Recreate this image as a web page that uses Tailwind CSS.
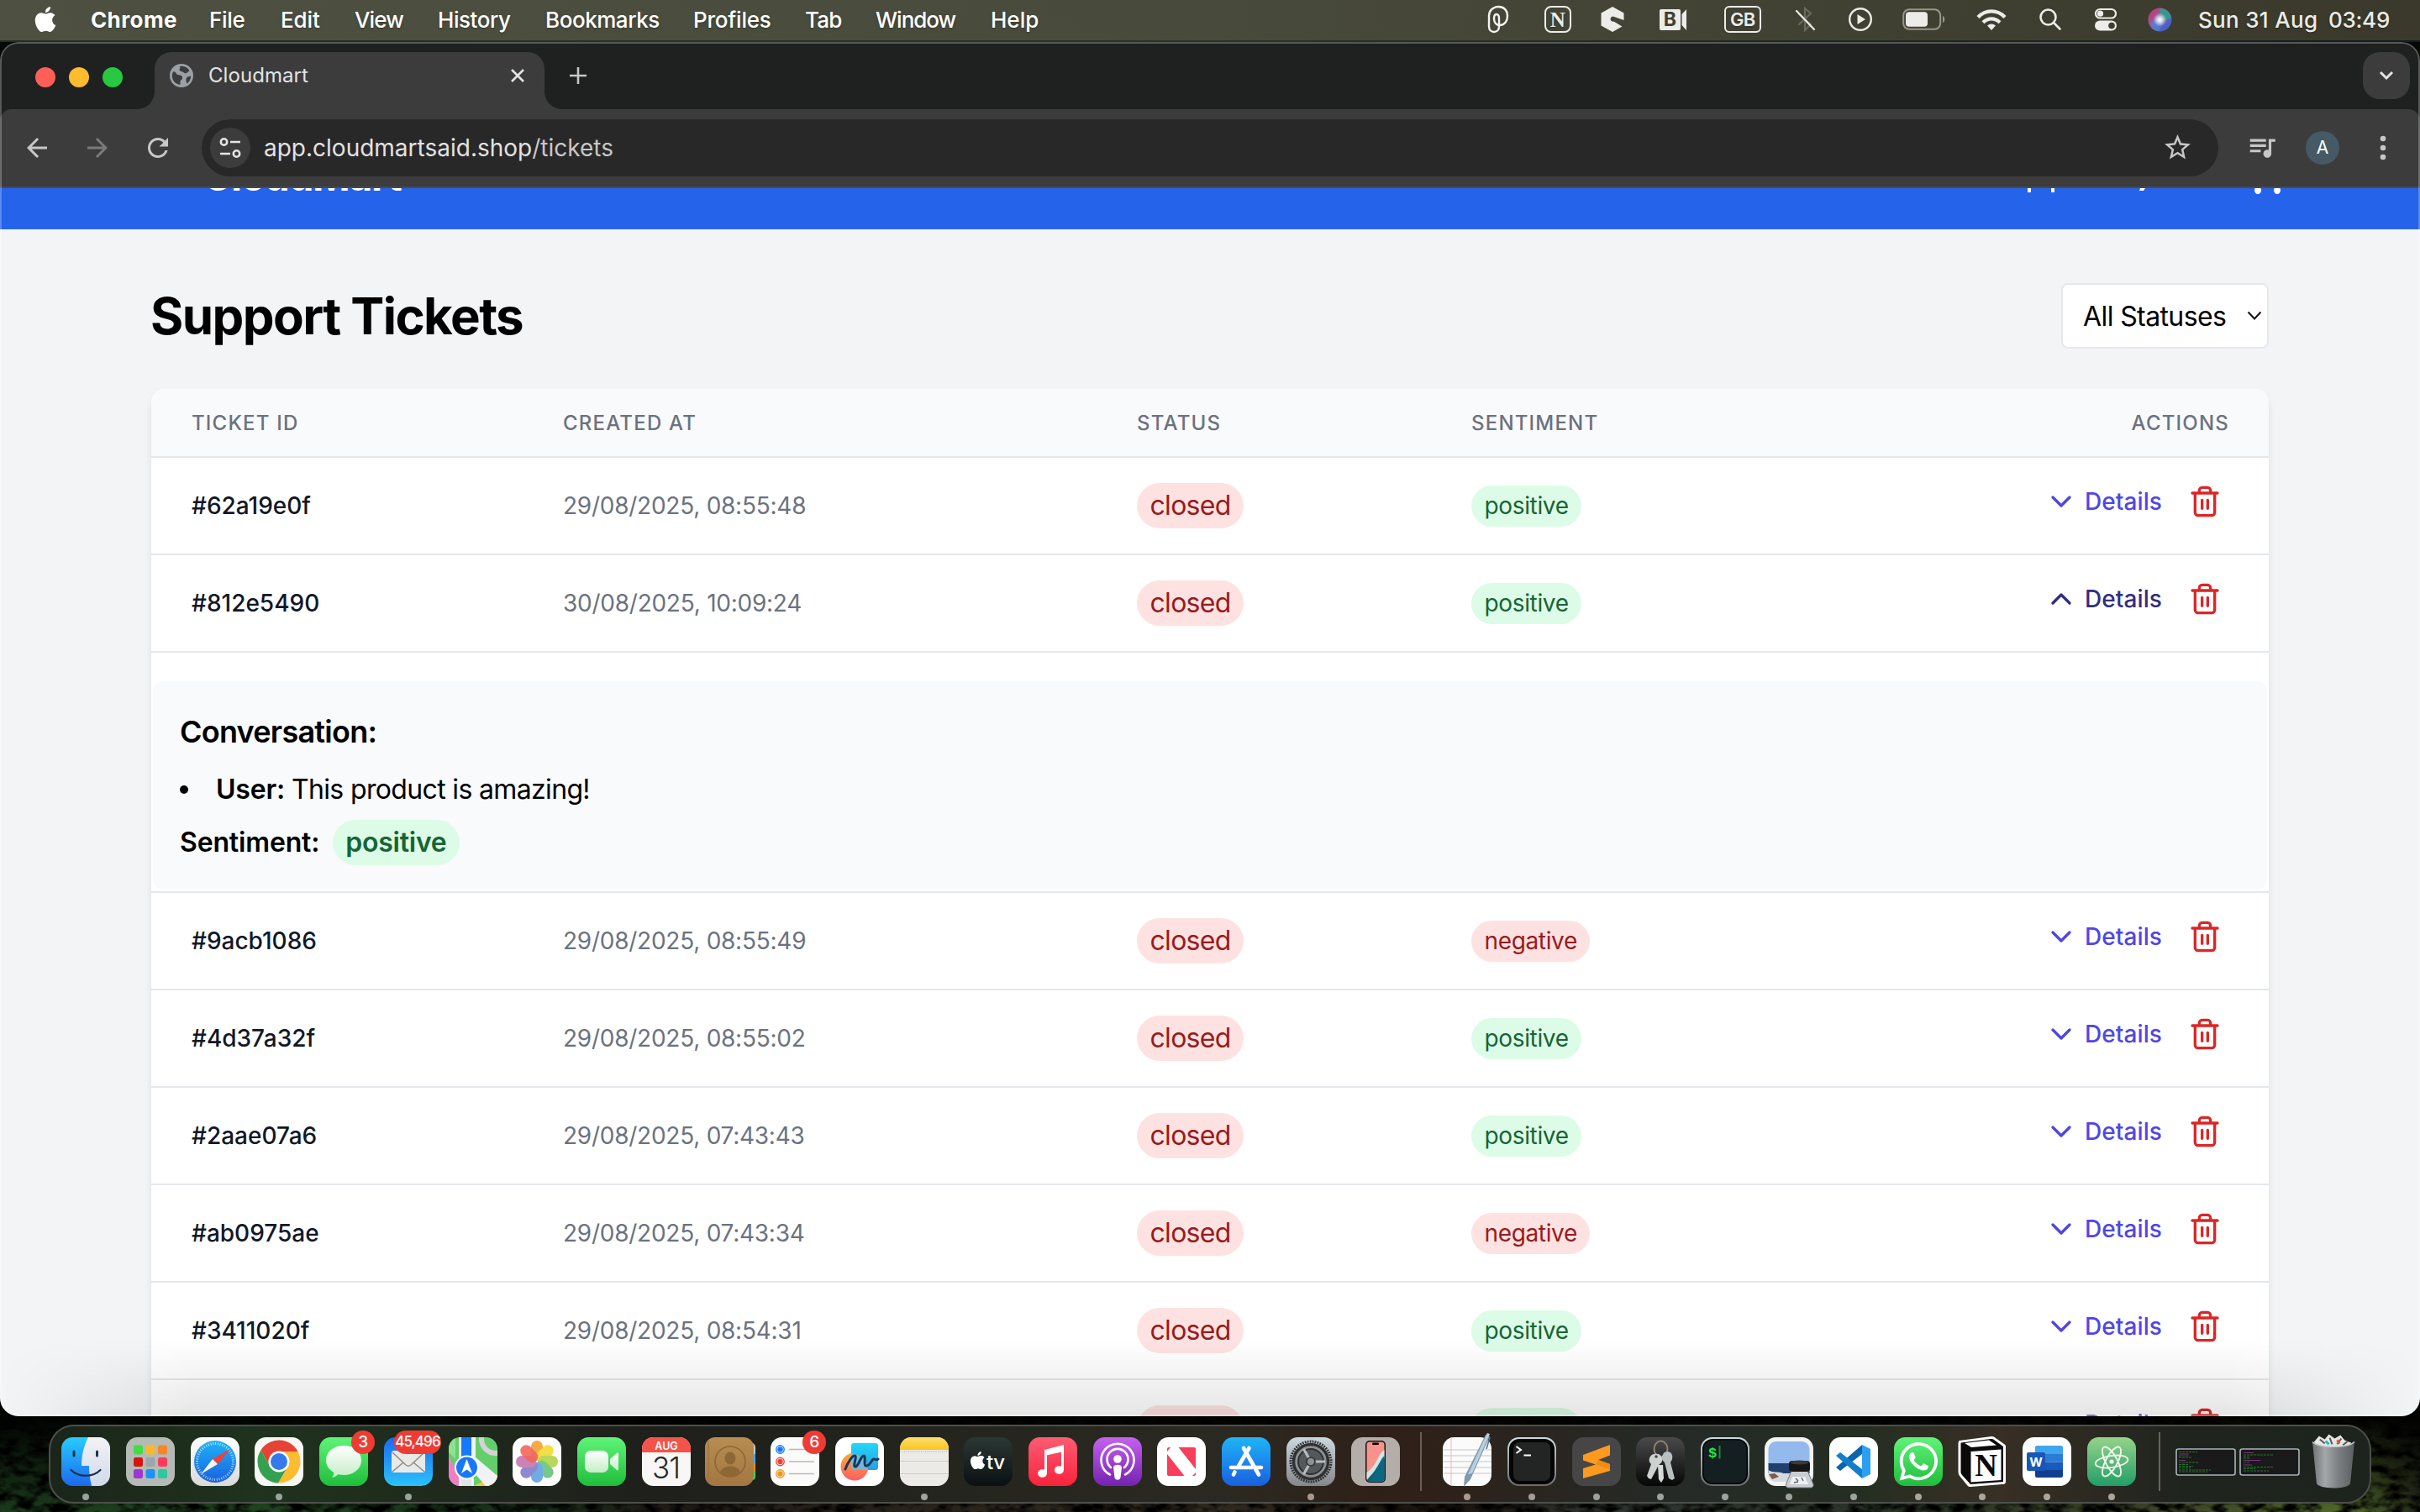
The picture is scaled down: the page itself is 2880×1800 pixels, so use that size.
<!DOCTYPE html>
<html lang="en">
<head>
<meta charset="utf-8">
<title>Cloudmart</title>
<script src="https://cdn.jsdelivr.net/npm/@tailwindcss/browser@4"></script>
</head>
<body class="h-[1800px] w-[2880px] overflow-hidden bg-[#060806] font-['Inter',sans-serif] text-black">

<svg width="0" height="0" class="absolute">
  <defs>
    <linearGradient id="gGreen" x1="0" y1="0" x2="0" y2="1"><stop offset="0" stop-color="#5ff478"/><stop offset="1" stop-color="#20bd3c"/></linearGradient>
    <linearGradient id="gFinder" x1="0" y1="0" x2="0" y2="1"><stop offset="0" stop-color="#27ccfd"/><stop offset="1" stop-color="#1d68ef"/></linearGradient>
    <linearGradient id="gFinderR" x1="0" y1="0" x2="0" y2="1"><stop offset="0" stop-color="#f4f2f4"/><stop offset="1" stop-color="#cfdaea"/></linearGradient>
    <linearGradient id="gMail" x1="0" y1="0" x2="0" y2="1"><stop offset="0" stop-color="#1c68f0"/><stop offset="1" stop-color="#2ac3fb"/></linearGradient>
    <linearGradient id="gBlue" x1="0" y1="0" x2="0" y2="1"><stop offset="0" stop-color="#1fb4f6"/><stop offset="1" stop-color="#1a5fe0"/></linearGradient>
    <linearGradient id="gWhite" x1="0" y1="0" x2="0" y2="1"><stop offset="0" stop-color="#ffffff"/><stop offset="1" stop-color="#d9dad9"/></linearGradient>
    <linearGradient id="gBubble" x1="0" y1="0" x2="0" y2="1"><stop offset="0" stop-color="#ffffff"/><stop offset="1" stop-color="#c4edc6"/></linearGradient>
    <linearGradient id="gContacts" x1="0" y1="0" x2="0" y2="1"><stop offset="0" stop-color="#b78d52"/><stop offset="1" stop-color="#a47641"/></linearGradient>
    <linearGradient id="gNotes" x1="0" y1="0" x2="0" y2="1"><stop offset="0" stop-color="#fbe06b"/><stop offset="1" stop-color="#fdc31f"/></linearGradient>
    <linearGradient id="gTv" x1="0" y1="0" x2="0" y2="1"><stop offset="0" stop-color="#2b3835"/><stop offset="1" stop-color="#0b1012"/></linearGradient>
    <linearGradient id="gMusic" x1="0" y1="0" x2="0" y2="1"><stop offset="0" stop-color="#fb5c74"/><stop offset="1" stop-color="#fa233b"/></linearGradient>
    <linearGradient id="gPod" x1="0" y1="0" x2="0" y2="1"><stop offset="0" stop-color="#c561ee"/><stop offset="1" stop-color="#7423b0"/></linearGradient>
    <linearGradient id="gSet" x1="0" y1="0" x2="0" y2="1"><stop offset="0" stop-color="#ccd7de"/><stop offset="1" stop-color="#86878a"/></linearGradient>
    <linearGradient id="gKey" x1="0" y1="0" x2="0" y2="1"><stop offset="0" stop-color="#4a4a4c"/><stop offset="1" stop-color="#060606"/></linearGradient>
    <linearGradient id="gRim" x1="0" y1="0" x2="0" y2="1"><stop offset="0" stop-color="#c6dde2"/><stop offset="1" stop-color="#6d6b69"/></linearGradient>
    <linearGradient id="gAtom" x1="0" y1="0" x2="0" y2="1"><stop offset="0" stop-color="#95d38a"/><stop offset="1" stop-color="#229e68"/></linearGradient>
    <linearGradient id="gFree" x1="0" y1="0" x2="0" y2="1"><stop offset="0" stop-color="#22d7f9"/><stop offset="1" stop-color="#2a9fe0"/></linearGradient>
    <linearGradient id="gOrange" x1="0" y1="0" x2="0" y2="1"><stop offset="0" stop-color="#fbab3d"/><stop offset="1" stop-color="#fb5f62"/></linearGradient>
    <linearGradient id="gTrash" x1="0" y1="0" x2="1" y2="0"><stop offset="0" stop-color="#6e7275"/><stop offset=".3" stop-color="#a3a7aa"/><stop offset=".6" stop-color="#7d8184"/><stop offset="1" stop-color="#5b5f61"/></linearGradient>
    <linearGradient id="gSiri" x1="0" y1="0" x2="1" y2="1"><stop offset="0" stop-color="#d82b5f"/><stop offset=".45" stop-color="#8d5fa8"/><stop offset="1" stop-color="#1b62d6"/></linearGradient>
    <radialGradient id="gGlow"><stop offset="0" stop-color="#fff"/><stop offset=".35" stop-color="#fff" stop-opacity=".75"/><stop offset="1" stop-color="#fff" stop-opacity="0"/></radialGradient>
    <clipPath id="sq"><rect width="58" height="58" rx="13.500"/></clipPath>
    <g id="apple"><path d="M12.152 6.896c-.948 0-2.415-1.078-3.96-1.04-2.04.027-3.91 1.183-4.961 3.014-2.117 3.675-.546 9.103 1.519 12.09 1.013 1.454 2.208 3.09 3.792 3.039 1.52-.065 2.09-.987 3.935-.987 1.831 0 2.35.987 3.96.948 1.637-.026 2.676-1.48 3.676-2.948 1.156-1.688 1.636-3.325 1.662-3.415-.039-.013-3.182-1.221-3.22-4.857-.026-3.04 2.48-4.494 2.597-4.559-1.429-2.09-3.623-2.324-4.39-2.376-2-.156-3.675 1.09-4.61 1.09zM15.53 3.83c.843-1.012 1.4-2.427 1.245-3.83-1.207.052-2.662.805-3.532 1.818-.78.896-1.454 2.338-1.273 3.714 1.338.104 2.715-.688 3.559-1.701"/></g>
  </defs>
</svg>

<!-- Menu bar -->
<header class="flex h-12 items-center justify-between bg-linear-to-r from-[#4e5041] via-[#484a3b] to-[#3a392b] pb-[2px] text-[26px] font-medium text-white text-shadow-md">
  <nav class="flex items-center pl-[39px]">
    <span class="w-[69px]"><svg width="30" height="30" viewBox="0 0 24 24" fill="#fff"><use href="#apple"/></svg></span>
    <span class="w-[141px] font-bold tracking-[0.39px]">Chrome</span>
    <span class="w-[85px] tracking-[-0.3px]">File</span>
    <span class="w-[88px] tracking-[-0.1px]">Edit</span>
    <span class="w-[99px] tracking-[-0.9px]">View</span>
    <span class="w-[128px] tracking-[-0.45px]">History</span>
    <span class="w-[176px] tracking-[-0.45px]">Bookmarks</span>
    <span class="w-[133px] tracking-[-0.2px]">Profiles</span>
    <span class="w-[84px] tracking-[-0.8px]">Tab</span>
    <span class="w-[137px] tracking-[-1px]">Window</span>
    <span>Help</span>
  </nav>
  <div class="flex items-center pr-[36px] text-[#ecece8]">
    <!-- status icons -->
    <span class="flex w-[70px] justify-center pr-[5px]"><svg width="26" height="34" viewBox="0 0 26 34" fill="none" stroke="#f4f4f0" stroke-width="2.400" stroke-linecap="round"><path d="M15 24c5.500 0 9-5 9-11C24 6 19.500 2 13.500 2 6.500 2 2 6.500 2 13v12.500C2 29.500 4.500 32 8 32s6-2.500 6-6.500V16c0-3-1-5-3-5s-3 2-3 5c0 5 3 8 7 8"/></svg></span>
    <span class="flex w-[66px] justify-center"><span class="flex size-8 items-center justify-center rounded-[8px] border-[2.500px] border-[#ecece8] font-['Liberation_Serif',serif] text-[25px] leading-none font-bold">N</span></span>
    <span class="flex w-[70px] justify-center pr-[5px]"><svg width="28" height="32" viewBox="0 0 28 32"><path d="M14 1l13.500 7.500V17L16 13a3 3 0 1 0-.500 5.500l10 6L14 31 .500 23.500v-15z" fill="#ecece8"/></svg></span>
    <span class="flex w-[72px] justify-center pr-[4px]"><span class="flex h-[25px] w-[25px] items-center justify-center rounded-[2px] bg-[#ecece8] text-[23px] leading-none font-bold text-[#3f4032] text-shadow-none">B</span><svg width="7" height="25" viewBox="0 0 7 25" fill="#ecece8"><path d="M7 0v25L1.500 19V6z"/></svg></span>
    <span class="flex w-[90px] justify-center"><span class="flex h-8 w-11 items-center justify-center rounded-[6px] border-2 border-[#ecece8] text-[22px] leading-none font-semibold tracking-[-0.5px]">GB</span></span>
    <span class="flex w-[60px] justify-center"><svg width="26" height="30" viewBox="0 0 26 30" fill="none" stroke-linecap="round"><path d="M5 9l14 12-7 7V2l7 6L5 21" stroke="#6a6a5d" stroke-width="2.200"/><path d="M2 5l21 22" stroke="#ecece8" stroke-width="2.200"/></svg></span>
    <span class="flex w-[70px] justify-center"><svg width="30" height="30" viewBox="0 0 30 30"><circle cx="15" cy="15" r="12.800" fill="none" stroke="#ecece8" stroke-width="2.400"/><path d="M11.500 9v12l9.500-6z" fill="#ecece8"/></svg></span>
    <span class="flex w-[82px] justify-center"><svg width="51" height="26" viewBox="0 0 51 26"><rect x="1.200" y="1.200" width="44" height="23.600" rx="7" fill="none" stroke="#97978c" stroke-width="2"/><rect x="4" y="4.200" width="26" height="17.600" rx="4" fill="#ecece8"/><path d="M48 9c3 1 3 7 0 8z" fill="#97978c"/></svg></span>
    <span class="flex w-[76px] justify-center pl-[3px]"><svg width="36" height="27" viewBox="0 0 36 27" fill="none" stroke="#ecece8" stroke-width="4.200"><path d="M2 10.500c9-9.500 23-9.500 32 0"/><path d="M8 16.800c6-5.800 14-5.800 20 0"/><path d="M18 26l-5-5.500c3-2.700 7-2.700 10 0z" fill="#ecece8" stroke="none"/></svg></span>
    <span class="flex w-[66px] justify-center"><svg width="28" height="28" viewBox="0 0 28 28" fill="none" stroke="#ecece8" stroke-width="2.600" stroke-linecap="round"><circle cx="11.500" cy="11.500" r="9"/><path d="M18.500 18.500l7 7"/></svg></span>
    <span class="flex w-[66px] justify-center"><svg width="28" height="28" viewBox="0 0 28 28"><rect x="2" y="2" width="24" height="10.500" rx="5.250" fill="none" stroke="#ecece8" stroke-width="2.200"/><circle cx="7.500" cy="7.200" r="3.600" fill="#ecece8"/><rect x="1" y="15.500" width="26" height="12" rx="6" fill="#ecece8"/><circle cx="21" cy="21.500" r="3.800" fill="#3d3c2e"/></svg></span>
    <span class="flex w-[77px] justify-center pr-[13px]"><svg width="29" height="29" viewBox="0 0 29 29"><circle cx="14.500" cy="14.500" r="14" fill="url(#gSiri)"/><path d="M14 1c8 0 13 5 14 11-5 4-10 3-13 2z" fill="#27a389" opacity=".8"/><path d="M3 19c4-6 10-7 12-4 3 2 2 8-2 13-6 0-9-4-10-9z" fill="#3e8fe8" opacity=".5"/><circle cx="14.500" cy="14.500" r="8" fill="url(#gGlow)"/></svg></span>
    <span class="w-[155px] tracking-[0.32px]">Sun 31 Aug</span>
    <span class="tracking-[-0.26px]">03:49</span>
  </div>
</header>
<div class="h-[2px] bg-linear-to-r from-[#2a2c22] via-[#2c3320] to-[#10201c]"></div>

<!-- Browser window -->
<main class="relative flex h-[1636px] flex-col overflow-hidden rounded-[22px] bg-[#1f2120]">
  <!-- tab strip -->
  <div class="flex h-20 shrink-0 items-stretch pt-3">
    <div class="flex w-[162px] items-center gap-4 pb-[9px] pl-[42px]">
      <span class="size-6 rounded-full bg-[#ff5f57]"></span><span class="size-6 rounded-full bg-[#febc2e]"></span><span class="size-6 rounded-full bg-[#28c840]"></span>
    </div>
    <svg width="22" height="68" viewBox="0 0 22 68" fill="#3c3c3c"><path d="M22 46v22H0c14 0 22-10 22-22z"/></svg>
    <div class="flex w-[464px] items-center rounded-t-[20px] bg-[#3c3c3c] pr-[18px] pb-3 pl-[18px]">
      <svg width="28" height="28" viewBox="0 0 28 28"><circle cx="14" cy="14" r="14" fill="#9aa0a6"/><path d="M4.500 9c3 .2 3 4 6 4.200 3.500.2 5 1.500 4.500 4-.4 2-2.500 1.800-2.500 4.300v3.300C7 24.500 2.800 20 2.800 14c0-2 .6-3.600 1.700-5zM12 3c4.500-1 9.500 1.500 11.500 5l-3 2.800c-1.500 1-3.200.2-4.300-.8-1.200-1-4-.6-4.500-2.500C11.200 5.600 13 5 12 3zM21 15.500l4.200-1c0 3.600-1.900 6.800-4.700 8.900-1.300-2.500-1.700-5.600.5-7.900z" fill="#3c3c3c"/></svg>
      <span class="ml-[18px] flex-1 text-[24px] tracking-[0.060px] text-[#e3e3e3]">Cloudmart</span>
      <svg width="28" height="28" viewBox="0 0 28 28" stroke="#e3e3e3" stroke-width="2.600"><path d="M7 7l14 14M21 7L7 21"/></svg>
    </div>
    <svg width="22" height="68" viewBox="0 0 22 68" fill="#3c3c3c"><path d="M0 46v22h22C8 68 0 58 0 46z"/></svg>
    <svg class="mt-[17px] ml-[7px]" width="22" height="22" viewBox="0 0 22 22" stroke="#c7c7c7" stroke-width="2.600"><path d="M11 1v20M1 11h20"/></svg>
    <div class="mr-3 ml-auto flex size-14 items-center justify-center rounded-[20px] bg-[#3c3c3c]"><svg width="20" height="14" viewBox="0 0 20 14" fill="none" stroke="#e3e3e3" stroke-width="3"><path d="M3 3l7 7 7-7"/></svg></div>
  </div>
  <!-- toolbar -->
  <div class="flex h-[94px] shrink-0 items-center rounded-t-[14px] border-b-2 border-[#4a4a4a] bg-[#3c3c3c] pl-[26px]">
    <svg class="mr-[36px]" width="36" height="36" viewBox="0 0 24 24" fill="#c7c7c7"><path d="M20 11H7.830l5.590-5.590L12 4l-8 8 8 8 1.410-1.410L7.830 13H20v-2z"/></svg>
    <svg class="mr-[36px]" width="36" height="36" viewBox="0 0 24 24" fill="#7a7a7a"><path d="M12 4l-1.410 1.410L16.170 11H4v2h12.170l-5.580 5.590L12 20l8-8z"/></svg>
    <svg class="mr-[34px]" width="36" height="36" viewBox="0 0 24 24" fill="#c7c7c7"><path d="M17.650 6.350C16.200 4.900 14.210 4 12 4c-4.420 0-7.990 3.580-7.990 8s3.570 8 7.990 8c3.730 0 6.840-2.550 7.730-6h-2.080c-.82 2.330-3.040 4-5.650 4-3.310 0-6-2.690-6-6s2.690-6 6-6c1.660 0 3.140.69 4.220 1.780L13 11h7V4l-2.350 2.350z"/></svg>
    <div class="flex h-[68px] w-[2400px] items-center rounded-full bg-[#282828] pr-[30px] pl-[10px]">
      <span class="flex size-12 items-center justify-center rounded-full bg-[#3c3c3c]"><svg width="28" height="28" viewBox="0 0 28 28" fill="none" stroke="#e3e3e3" stroke-width="2.600"><circle cx="6.500" cy="7" r="3.700"/><path d="M14 7h12M2 21h12"/><circle cx="21.500" cy="21" r="3.700"/></svg></span>
      <span class="ml-[16px] flex-1 text-[28px] text-[#e3e3e3]">app.cloudmartsaid.shop<span class="text-[#c7c7c7]">/tickets</span></span>
      <svg class="mb-[2px]" width="37" height="37" viewBox="0 0 24 24" fill="#c7c7c7"><path d="M22 9.240l-7.190-.62L12 2 9.190 8.630 2 9.240l5.460 4.730L5.820 21 12 17.270 18.180 21l-1.630-7.030L22 9.240zM12 15.400l-3.760 2.270 1-4.280-3.320-2.880 4.380-.38L12 6.100l1.710 4.040 4.380.38-3.320 2.880 1 4.280L12 15.400z"/></svg>
    </div>
    <svg class="mb-[3px] ml-[33px]" width="38" height="38" viewBox="0 0 24 24" fill="#c7c7c7"><path d="M15 6H3v2h12V6zm0 4H3v2h12v-2zM3 16h8v-2H3v2zM17 6v8.180c-.31-.11-.65-.18-1-.18-1.660 0-3 1.340-3 3s1.340 3 3 3 3-1.340 3-3V8h3V6h-5z"/></svg>
    <span class="ml-[33px] flex size-10 items-center justify-center rounded-full bg-[#455a64] text-[21px] text-white">A</span>
    <svg class="ml-[48px]" width="8" height="32" viewBox="0 0 8 32" fill="#c7c7c7"><circle cx="4" cy="5" r="3.300"/><circle cx="4" cy="16" r="3.300"/><circle cx="4" cy="27" r="3.300"/></svg>
  </div>

  <!-- page -->
  <div class="flex flex-1 flex-col overflow-hidden bg-[#f3f4f6]">
    <div class="flex h-[49px] shrink-0 items-start justify-between overflow-hidden bg-[#2563eb] pr-[164px] pl-[241px] text-white">
      <span class="-mt-[42px] text-[48px] leading-[56px] font-bold tracking-[-1.400px]">CloudMart</span>
      <svg width="310" height="10" viewBox="0 0 310 10" fill="#fff"><path d="M7 0h4v5H7zM35 0h4v5h-4zM141 0h6l-2 3h-5z"/><ellipse cx="281" cy="2.500" rx="4" ry="4.500"/><ellipse cx="304" cy="2.500" rx="4" ry="4.500"/></svg>
    </div>
    <div class="flex flex-1 flex-col px-[180px]">
      <div class="mt-16 mb-12 flex h-[78px] shrink-0 items-center justify-between">
        <h1 class="text-[60px] font-bold tracking-[-1.580px] -ml-px">Support Tickets</h1>
        <div class="flex h-[78px] w-[247px] items-center justify-between rounded-[8px] border-2 border-[#e5e7eb] bg-white pr-[6px] pl-[24px] text-[32px]"><span class="pt-[2px] tracking-[-0.600px]">All Statuses</span><svg width="18" height="12" viewBox="0 0 18 12" fill="none" stroke="#111" stroke-width="2"><path d="M1.500 1.500L9 9.500l7.500-8"/></svg></div>
      </div>
      <section id="tickets" class="-mb-10 h-[1270px] shrink-0 overflow-hidden rounded-[16px] bg-white shadow-[0_8px_12px_-2px_rgba(0,0,0,0.1),0_4px_8px_-4px_rgba(0,0,0,0.1)]">
        <div class="grid h-[82px] grid-cols-[443px_683px_398px_1fr] items-center border-b-2 border-[#e5e7eb] bg-[#f9fafb] pt-[1px] pr-[47px] pl-[48px] text-[24px] font-medium tracking-[1.200px] text-[#6b7280]">
          <span>TICKET ID</span><span class="-ml-px">CREATED AT</span><span class="-ml-px">STATUS</span><span class="-ml-px flex justify-between"><span>SENTIMENT</span><span>ACTIONS</span></span>
        </div>
      </section>
    </div>
  </div>
  <!-- dock shadow falling on the page, and the window's hairline -->
  <div class="pointer-events-none absolute inset-x-0 bottom-0 h-[90px] bg-linear-to-b from-black/0 to-black/10 mask-x-from-92% mask-x-to-100%"></div>
  <div class="pointer-events-none absolute inset-0 rounded-[22px] border-2 border-white/25"></div>
</main>

<!-- Desktop and dock -->
<footer class="relative h-[114px]">
  <svg class="absolute inset-x-0 -top-10 -z-10" width="2880" height="154" viewBox="0 0 2880 154">
    <defs>
      <linearGradient id="wp" x1="0" x2="1" y1="0" y2="0"><stop offset="0" stop-color="#1c3c1d"/><stop offset=".1" stop-color="#234a21"/><stop offset=".22" stop-color="#18321a"/><stop offset=".27" stop-color="#231e18"/><stop offset=".5" stop-color="#352e21"/><stop offset=".6" stop-color="#1c130e"/><stop offset=".66" stop-color="#343934"/><stop offset=".78" stop-color="#2c3829"/><stop offset=".9" stop-color="#434a29"/><stop offset=".97" stop-color="#56702a"/><stop offset="1" stop-color="#262c1c"/></linearGradient>
      <linearGradient id="wpd" x1="0" x2="0" y1="0" y2="1"><stop offset=".3" stop-color="#000" stop-opacity=".92"/><stop offset="1" stop-color="#000" stop-opacity=".05"/></linearGradient>
      <filter id="leaf" x="0" y="0" width="1" height="1"><feTurbulence type="fractalNoise" baseFrequency="0.050 0.090" numOctaves="3" seed="7"/><feColorMatrix values="0 0 0 0 0  0 0 0 0 0  0 0 0 0 0  3 0 0 0 -1.100"/></filter>
    </defs>
    <rect width="2880" height="154" fill="url(#wp)"/>
    <rect width="2880" height="154" filter="url(#leaf)"/>
    <rect width="2880" height="154" fill="url(#wpd)"/>
  </svg>

  <div class="absolute top-[10px] left-[58px] flex h-[94px] w-[2764px] items-center rounded-[30px] border-2 border-[#4d4f4a] bg-[linear-gradient(90deg,#1b251a_0%,#1f331e_9%,#1f1f1b_26%,#2a2a22_50%,#2f2018_58%,#252a27_70%,#252e22_78%,#382f25_84%,#1f241e_92%,#1d231d_100%)] pb-[6px] pl-[4px]">
    <div class="grid w-[1611px] grid-cols-21 justify-items-center">

      <div class="relative"><svg width="58" height="58" viewBox="0 0 58 58"><g clip-path="url(#sq)"><rect width="58" height="58" fill="url(#gFinder)"/><path d="M32 0c-5 10-8 21-8 34h9c0 8 1 16 3 24h22V0z" fill="url(#gFinderR)"/></g><path d="M15 17v5M42.500 17v5" stroke="#1b3550" stroke-width="3" stroke-linecap="round"/><path d="M11.500 39c9 9 26 9 35 0" fill="none" stroke="#17304a" stroke-width="2.200" stroke-linecap="round"/></svg><i class="absolute top-[67px] left-[25px] size-2 rounded-full bg-[#9aa399]"></i></div>

      <div class="relative"><svg width="58" height="58" viewBox="0 0 58 58"><rect width="58" height="58" rx="13.500" fill="#b5bab5"/><rect x="9" y="9.500" width="11" height="11" rx="2.500" fill="#42dc45"/><rect x="23.500" y="9.500" width="11" height="11" rx="2.500" fill="#fcb82b"/><rect x="38" y="9.500" width="11" height="11" rx="2.500" fill="#f5872a"/><rect x="9" y="24" width="11" height="11" rx="2.500" fill="#d3170f"/><rect x="23.500" y="24" width="11" height="11" rx="2.500" fill="#9da5aa"/><rect x="38" y="24" width="11" height="11" rx="2.500" fill="#fb3b5c"/><rect x="9" y="38" width="11" height="11" rx="2.500" fill="#9c37d4"/><rect x="23.500" y="38" width="11" height="11" rx="2.500" fill="#1a93fb"/><rect x="38" y="38" width="11" height="11" rx="2.500" fill="#2dc7a1"/></svg></div>

      <div class="relative"><svg width="58" height="58" viewBox="0 0 58 58"><rect width="58" height="58" rx="13.500" fill="url(#gWhite)"/><circle cx="29" cy="29" r="25" fill="url(#gBlue)"/><circle cx="29" cy="29" r="21.500" fill="none" stroke="#d9efff" stroke-width="3" stroke-dasharray=".8 2"/><path d="M47 14L26 26l6 6z" fill="#fb3b34"/><path d="M12 44l14-18 6 6z" fill="#f4f4f4"/></svg></div>

      <div class="relative"><svg width="58" height="58" viewBox="0 0 58 58"><rect width="58" height="58" rx="13.500" fill="#f6f6f4"/><path d="M7.360 15.500A25.500 25.500 0 0 1 51.500 17H29a12 12 0 0 0-10.400 18z" fill="#e54335"/><path d="M51.500 17A25.500 25.500 0 0 1 28.100 54.500L39.400 35A12 12 0 0 0 29 17z" fill="#fbbc2f"/><path d="M28.100 54.500A25.500 25.500 0 0 1 7.360 15.500L18.600 35a12 12 0 0 0 20.800 0z" fill="#34a150"/><circle cx="29" cy="29" r="12.500" fill="#fff"/><circle cx="29" cy="29" r="10" fill="#3679ea"/></svg><i class="absolute top-[67px] left-[25px] size-2 rounded-full bg-[#9aa399]"></i></div>

      <div class="relative"><svg width="58" height="58" viewBox="0 0 58 58"><rect width="58" height="58" rx="13.500" fill="url(#gGreen)"/><path d="M29 10c12 0 21 7.600 21 17.500S41 45 29 45c-2.500 0-4.600-.3-6.700-.8-1.800 2-4.300 3.300-7.300 3.600 1.800-1.800 2.500-4 2.200-6C11.500 38.500 8 33.500 8 27.500 8 17.600 17 10 29 10z" fill="url(#gBubble)"/></svg><span class="absolute -top-2 left-[38px] flex size-7 items-center justify-center rounded-full bg-[#ee3b33] text-[19px] font-medium text-white">3</span></div>

      <div class="relative"><svg width="58" height="58" viewBox="0 0 58 58"><rect width="58" height="58" rx="13.500" fill="url(#gMail)"/><rect x="9" y="16" width="40" height="26" rx="3" fill="#e9e9e7"/><path d="M10 18l16 15c2 1.600 4 1.600 6 0l16-15M10 41l13-11M48 41L35 30" fill="none" stroke="#8b8c8c" stroke-width="1.500"/></svg><span class="absolute -top-2 left-[12px] flex h-7 w-[56px] items-center justify-center rounded-full bg-[#ee3b33] text-[17px] font-medium tracking-[-0.900px] text-white">45,496</span><i class="absolute top-[67px] left-[25px] size-2 rounded-full bg-[#9aa399]"></i></div>

      <div class="relative"><svg width="58" height="58" viewBox="0 0 58 58"><g clip-path="url(#sq)"><rect width="58" height="58" fill="#63cf6c"/><path d="M0 22l18 36H0z" fill="#ee7fc4"/><path d="M30 58l28-14v14z" fill="#fcc92c"/><path d="M0 0h8v26L0 18z" fill="#8ce28f"/><path d="M12 0h20v24l26 22v12H44L30 42v16H12z" fill="#f2f1f5"/><circle cx="56" cy="2" r="17" fill="none" stroke="#d3d3d6" stroke-width="6"/><path d="M15 0h12v58H15z" fill="#1678fa"/><path d="M15 40h12v18H15z" fill="#e3e2e8"/></g><circle cx="21.500" cy="36" r="14.500" fill="#fff"/><circle cx="21.500" cy="36" r="12.500" fill="#1678fa"/><path d="M21.500 26l6.500 17-6.500-4.500L15 43z" fill="#fff"/></svg></div>

      <div class="relative"><svg width="58" height="58" viewBox="0 0 58 58"><rect width="58" height="58" rx="13.500" fill="#fdfdfd"/><g opacity=".86"><rect x="22" y="4" width="14" height="24" rx="7" fill="#f99b2a"/><rect x="22" y="4" width="14" height="24" rx="7" fill="#f2d928" transform="rotate(45 29 29)"/><rect x="22" y="4" width="14" height="24" rx="7" fill="#aed13f" transform="rotate(90 29 29)"/><rect x="22" y="4" width="14" height="24" rx="7" fill="#63c07a" transform="rotate(135 29 29)"/><rect x="22" y="4" width="14" height="24" rx="7" fill="#5a9fe0" transform="rotate(180 29 29)"/><rect x="22" y="4" width="14" height="24" rx="7" fill="#7e77c9" transform="rotate(225 29 29)"/><rect x="22" y="4" width="14" height="24" rx="7" fill="#c36fae" transform="rotate(270 29 29)"/><rect x="22" y="4" width="14" height="24" rx="7" fill="#f0503f" opacity=".9" transform="rotate(315 29 29)"/></g></svg></div>

      <div class="relative"><svg width="58" height="58" viewBox="0 0 58 58"><rect width="58" height="58" rx="13.500" fill="url(#gGreen)"/><rect x="9" y="16" width="28" height="26" rx="7" fill="url(#gBubble)"/><path d="M39 26l8-7c1-1 2-.5 2 1v18c0 1.500-1 2-2 1l-8-7z" fill="url(#gBubble)"/></svg></div>

      <div class="relative"><svg width="58" height="58" viewBox="0 0 58 58"><g clip-path="url(#sq)"><rect width="58" height="58" fill="#f8f7f6"/><rect width="58" height="18" fill="#f4534a"/></g><text x="29" y="14.500" text-anchor="middle" font-family="Inter" font-size="12.500" font-weight="600" fill="#fff">AUG</text><text x="28.500" y="48.500" text-anchor="middle" font-family="Inter" font-size="35" font-weight="300" letter-spacing="-1" fill="#2a2a2a">31</text></svg></div>

      <div class="relative"><svg width="60" height="58" viewBox="0 0 60 58"><path d="M50 7h6c2 0 4 2 4 5v8H50z" fill="#c9c7c0"/><path d="M50 20h10v11H50z" fill="#4aa8e6"/><path d="M50 31h10v10H50z" fill="#f28a1c"/><path d="M50 41h10v6c0 3-2 4-4 4h-6z" fill="#4fce5d"/><rect width="58" height="58" rx="12" fill="url(#gContacts)"/><circle cx="30" cy="29" r="18" fill="none" stroke="#8d6736" stroke-width="1.600"/><ellipse cx="30" cy="25" rx="6.500" ry="7.500" fill="#8d6736"/><path d="M18 42c2-10 22-10 24 0-6 6-18 6-24 0z" fill="#8d6736"/><path d="M4 4v50" stroke="#957040" stroke-width="1"/></svg></div>

      <div class="relative"><svg width="58" height="58" viewBox="0 0 58 58"><rect width="58" height="58" rx="13.500" fill="#fbfbfa"/><g fill="none" stroke-width="1.400"><circle cx="11.500" cy="14.500" r="4.700" stroke="#1479f3"/><circle cx="11.500" cy="29" r="4.700" stroke="#ee4136"/><circle cx="11.500" cy="43.500" r="4.700" stroke="#f0951d"/></g><circle cx="11.500" cy="14.500" r="3.200" fill="#1479f3"/><circle cx="11.500" cy="29" r="3.200" fill="#ee4136"/><circle cx="11.500" cy="43.500" r="3.200" fill="#f0951d"/><path d="M22 14.500h30M22 29h30M22 43.500h30" stroke="#b9b9bb" stroke-width="1.300"/></svg><span class="absolute -top-2 left-[38px] flex size-7 items-center justify-center rounded-full bg-[#ee3b33] text-[19px] font-medium text-white">6</span></div>

      <div class="relative"><svg width="58" height="58" viewBox="0 0 58 58"><rect width="58" height="58" rx="13.500" fill="#fff"/><circle cx="23" cy="35" r="16.500" fill="url(#gOrange)"/><rect x="19" y="7" width="32" height="32" rx="3" fill="url(#gFree)"/><path d="M19 22v14c0 2 1 3 3 3h17c0-10-7-19-20-20z" fill="#8fb9d4" opacity=".8"/><path d="M12 38c3-8 8-16 11-16 4 0-3 13 1 13 4 0 6-13 10-13 3 0-1 12 3 12 5 0 6-8 9-8 2 0 3 2 5 0" fill="none" stroke="#123a5e" stroke-width="3" stroke-linecap="round"/></svg></div>

      <div class="relative"><svg width="58" height="58" viewBox="0 0 58 58"><g clip-path="url(#sq)"><rect width="58" height="58" fill="#eceae6"/><rect width="58" height="15" fill="url(#gNotes)"/><path d="M0 17h58" stroke="#a9a8a4" stroke-width="1" stroke-dasharray="1 1.500"/><path d="M0 28.500h58M0 43.500h58" stroke="#cfcdc8" stroke-width="1.200"/></g></svg><i class="absolute top-[67px] left-[25px] size-2 rounded-full bg-[#a3a39b]"></i></div>

      <div class="relative"><svg width="58" height="58" viewBox="0 0 58 58"><rect width="58" height="58" rx="13.500" fill="url(#gTv)"/><g transform="translate(6 17) scale(.88)" fill="#fff"><use href="#apple"/></g><text x="27" y="37.500" font-family="Inter" font-size="24" font-weight="500" letter-spacing="-.5" fill="#fff">tv</text></svg></div>

      <div class="relative"><svg width="58" height="58" viewBox="0 0 58 58"><rect width="58" height="58" rx="13.500" fill="url(#gMusic)"/><path d="M40.500 12v27" fill="none" stroke="#fff" stroke-width="3"/><path d="M19 15l23-6v8l-23 5z" fill="#fff"/><path d="M20.500 16v27" stroke="#fff" stroke-width="3"/><ellipse cx="16.500" cy="43" rx="5.500" ry="4.800" fill="#fff"/><ellipse cx="36.500" cy="39" rx="5.500" ry="4.800" fill="#fff"/></svg></div>

      <div class="relative"><svg width="58" height="58" viewBox="0 0 58 58"><rect width="58" height="58" rx="13.500" fill="url(#gPod)"/><g fill="none" stroke="#fff" stroke-width="2.600" stroke-linecap="round"><path d="M20 44.500a19.500 19.500 0 1 1 18 0"/><path d="M21 36a12.500 12.500 0 1 1 16 0"/></g><circle cx="29" cy="26" r="4.800" fill="#fff"/><path d="M24 36c0-4.500 10-4.500 10 0l-1.500 12c-.5 3.500-6.500 3.500-7 0z" fill="#fff"/></svg></div>

      <div class="relative"><svg width="58" height="58" viewBox="0 0 58 58"><rect width="58" height="58" rx="13.500" fill="#fff"/><path d="M25.500 12H44c1.200 0 2 .8 2 2v24zM12 20v24c0 1.200.8 2 2 2h18.500z" fill="#f93d5b"/><path d="M12 17v-3c0-1.200.8-2 2-2h2M46 42v2c0 1.200-.8 2-2 2h-2" fill="#f93d5b"/></svg></div>

      <div class="relative"><svg width="58" height="58" viewBox="0 0 58 58"><rect width="58" height="58" rx="13.500" fill="url(#gBlue)"/><g stroke="#fff" stroke-width="4.600" stroke-linecap="round"><path d="M32.500 13L19 36M26 13l18 31.500M11 36h25M41 36h6M15.500 41.500L14 44.500"/></g></svg></div>

      <div class="relative"><svg width="58" height="58" viewBox="0 0 58 58"><rect width="58" height="58" rx="13.500" fill="url(#gSet)"/><circle cx="29" cy="29" r="24" fill="none" stroke="#2e3032" stroke-width="3" stroke-dasharray="1.800 1.200"/><circle cx="29" cy="29" r="20.500" fill="#8e9194" stroke="#2e3032" stroke-width="3.500"/><circle cx="29" cy="29" r="15" fill="#55585a" stroke="#2e3032" stroke-width="2"/><path d="M29 29h17M29 29l-8.500-15M29 29l-8.500 15" stroke="#b7babc" stroke-width="3.200"/><circle cx="29" cy="29" r="5" fill="#8e9194" stroke="#2e3032" stroke-width="1.600"/></svg><i class="absolute top-[67px] left-[25px] size-2 rounded-full bg-[#a8988d]"></i></div>

      <div class="relative"><svg width="58" height="58" viewBox="0 0 58 58"><rect width="58" height="58" rx="13.500" fill="#b3aeaa"/><rect x="17" y="4" width="24" height="50" rx="5" fill="#101214"/><rect x="18.500" y="5.500" width="21" height="47" rx="3.500" fill="#f7938a"/><path d="M39.500 19c-9 7-9 17-21 33h17c2.500 0 4-1.500 4-3.500z" fill="#0d5f78"/><path d="M39.500 15c-8 5-8 18-21 27v8c12-9 13-20 21-25z" fill="#cfe6e4"/><path d="M39.500 22c-7 7-8 18-17 30.500h13c2.500 0 4-1.500 4-3.500z" fill="#0b6880"/><rect x="25" y="6.500" width="8" height="2.500" rx="1.200" fill="#000"/></svg></div>
    </div>

    <div class="ml-[15px] h-[70px] w-[2px] bg-[#6b5f56]"></div>

    <div class="ml-[16px] grid w-[843px] grid-cols-11 justify-items-center">

      <div class="relative"><svg class="overflow-visible" width="58" height="58" viewBox="0 0 58 58"><rect width="58" height="58" rx="13.500" fill="#fbfbfb"/><path d="M0 15h58M0 22h58M0 29h58M0 36h58M0 43h58" stroke="#c4c5c6" stroke-width="1.200"/><path d="M10 0v58" stroke="#f3b9b4" stroke-width="1"/><path d="M51-3l5 2L33 50l-8 9 1-12z" fill="#7f99ad"/><path d="M53-5l3 1-21 47-5 1z" fill="#b9cfdd"/><path d="M56 0l-4 14" stroke="#5c748a" stroke-width="1.600"/></svg><i class="absolute top-[67px] left-[25px] size-2 rounded-full bg-[#a8988d]"></i></div>

      <div class="relative"><svg width="58" height="58" viewBox="0 0 58 58"><rect width="58" height="58" rx="13.500" fill="url(#gRim)"/><rect x="2" y="2" width="54" height="54" rx="12" fill="#050505"/><rect x="7" y="6" width="44" height="46" rx="7" fill="#232424"/><path d="M10.500 11l5.500 4-5.500 4M19.500 21.500h8.500" fill="none" stroke="#fff" stroke-width="2"/></svg><i class="absolute top-[67px] left-[25px] size-2 rounded-full bg-[#a39d99]"></i></div>

      <div class="relative"><svg width="58" height="58" viewBox="0 0 58 58"><rect width="58" height="58" rx="13.500" fill="#464646"/><path d="M13 21l32-12v12.500L31 27l14 5v8L13 49V37l15-4.500-15-5z" fill="#ff9a1f"/><path d="M31 27l14 5v6L28 32.500z" fill="#f18b12"/></svg><i class="absolute top-[67px] left-[25px] size-2 rounded-full bg-[#9ea19e]"></i></div>

      <div class="relative"><svg width="58" height="58" viewBox="0 0 58 58"><rect width="58" height="58" rx="13.500" fill="url(#gKey)"/><ellipse cx="29.500" cy="14" rx="8" ry="9.500" fill="none" stroke="#8f8468" stroke-width="2"/><g fill="#b9bfbf"><path d="M37 17c5 0 7 4 6 9-.3 2-2 3-2 4l5 19-3 2-4-2-5-19c-2-2-4-4-3-7 1-4 3-6 6-6z"/><path d="M22 20c5-1 8 1 9 5 1 3-1 6-4 8l-9 17-3-1-2-3 5-14c-2-2-3-4-2-7 1-3 3-5 6-5z" fill="#cdd2d1"/><path d="M26 33h6l1 16-3 5-3-4z" fill="#d5d9d8"/></g><circle cx="24" cy="23" r="1.800" fill="#444"/></svg><i class="absolute top-[67px] left-[25px] size-2 rounded-full bg-[#9ea39e]"></i></div>

      <div class="relative"><svg width="58" height="58" viewBox="0 0 58 58"><rect width="58" height="58" rx="13.500" fill="url(#gRim)"/><rect x="2" y="2" width="54" height="54" rx="12" fill="#000"/><rect x="3.500" y="3.500" width="51" height="51" rx="11" fill="#141f22"/><text x="9" y="24" font-family="Liberation Mono" font-size="17" font-weight="700" fill="#2fe04a">$</text><path d="M22.500 10v15.500" stroke="#1d8a31" stroke-width="2"/></svg><i class="absolute top-[67px] left-[25px] size-2 rounded-full bg-[#9ea39e]"></i></div>

      <div class="relative"><svg class="overflow-visible" width="58" height="58" viewBox="0 0 58 58"><rect width="58" height="58" rx="13.500" fill="#f3f3f2"/><path d="M4.500 15c0-6 4-10 10-10h29c6 0 10 4 10 10v17h-49z" fill="#94b9ec"/><path d="M4.500 31h49v12h-49z" fill="#20416f"/><path d="M4.500 39c6 4 12 1 18 4h31c0 6-4 10-9 10H14c-6 0-9.500-4-9.500-8z" fill="#d5dadf"/><path d="M5 44l7-1 5 4-8 3z" fill="#7b5c48"/><path d="M32 40h19l7 16c.5 2.500-1 4-3 4H28c-2 0-3-1.500-2.500-4z" fill="#c9ced2" stroke="#777c80" stroke-width="1"/><path d="M33 47h15l4 9H30z" fill="#eef0f2"/><path d="M37 49l3 3M44 48l2 4M35 54l5-1" stroke="#5d6872" stroke-width="1.500"/><rect x="29" y="28" width="25" height="13" rx="4" fill="#161616"/><ellipse cx="41.500" cy="30" rx="11" ry="2.500" fill="#3b3b3b"/></svg><i class="absolute top-[67px] left-[25px] size-2 rounded-full bg-[#9ea39e]"></i></div>

      <div class="relative"><svg width="58" height="58" viewBox="0 0 58 58"><rect width="58" height="58" rx="13.500" fill="#fff"/><path d="M39 9l10 5v30l-10 5z" fill="#2ba0ee"/><path d="M39 9v11L13 40l-5-4z" fill="#0b64ac"/><path d="M8 22l5-4 26 20v11z" fill="#117fca"/></svg><i class="absolute top-[67px] left-[25px] size-2 rounded-full bg-[#9ea39e]"></i></div>

      <div class="relative"><svg width="58" height="58" viewBox="0 0 58 58"><rect width="58" height="58" rx="13.500" fill="url(#gGreen)"/><g transform="translate(6.500 6) scale(1.900)" fill="#fff"><path d="M17.472 14.382c-.297-.149-1.758-.867-2.030-.967-.273-.099-.471-.148-.67.15-.197.297-.767.966-.94 1.164-.173.199-.347.223-.644.075-.297-.15-1.255-.463-2.390-1.475-.883-.788-1.480-1.761-1.653-2.059-.173-.297-.018-.458.13-.606.134-.133.298-.347.446-.52.149-.174.198-.298.298-.497.099-.198.05-.371-.025-.52-.075-.149-.669-1.612-.916-2.207-.242-.579-.487-.5-.669-.51-.173-.008-.371-.01-.57-.01-.198 0-.52.074-.792.372-.272.297-1.040 1.016-1.040 2.479 0 1.462 1.065 2.875 1.213 3.074.149.198 2.096 3.200 5.077 4.487.709.306 1.262.489 1.694.625.712.227 1.360.195 1.871.118.571-.085 1.758-.719 2.006-1.413.248-.694.248-1.289.173-1.413-.074-.124-.272-.198-.57-.347m-5.421 7.403h-.004a9.870 9.870 0 01-5.031-1.378l-.361-.214-3.741.982.998-3.648-.235-.374a9.860 9.860 0 01-1.510-5.260c.001-5.450 4.436-9.884 9.888-9.884 2.640 0 5.122 1.030 6.988 2.898a9.825 9.825 0 012.893 6.994c-.003 5.450-4.437 9.884-9.885 9.884m8.413-18.297A11.815 11.815 0 0012.050 0C5.495 0 .16 5.335.157 11.892c0 2.096.547 4.142 1.588 5.945L.057 24l6.305-1.654a11.882 11.882 0 005.683 1.448h.005c6.554 0 11.890-5.335 11.893-11.893a11.821 11.821 0 00-3.480-8.413z"/></g></svg><i class="absolute top-[67px] left-[25px] size-2 rounded-full bg-[#aaa69a]"></i></div>

      <div class="relative"><svg class="overflow-visible" width="58" height="58" viewBox="0 0 58 58"><path d="M2 4l38-5c2 0 3 .4 5 2l10 7c2 1.500 2 2 2 4v40c0 3-1 4-4 4l-38 3c-2 0-3-.4-4-2L2 46c-1-1.500-1.500-3-1.500-5V8c0-2 .5-4 1.500-4z" fill="#fff"/><path d="M4 6.500l35-4.500c2 0 3 .4 4 1l11 8v42l-39 3L5 45c-1-1.500-1.500-2-1.500-4V8c0-1 0-1.500.5-1.500z" fill="#0a0a0a"/><path d="M8 7l29-3.500 9 6L16 12z" fill="#fff"/><path d="M15.500 17l36-2.500V51l-36 2.500z" fill="#fff"/><text x="33.500" y="46" text-anchor="middle" font-family="Liberation Serif" font-size="37" font-weight="700" fill="#0a0a0a">N</text></svg><i class="absolute top-[67px] left-[25px] size-2 rounded-full bg-[#aaa69a]"></i></div>

      <div class="relative"><svg width="58" height="58" viewBox="0 0 58 58"><rect width="58" height="58" rx="13.500" fill="#fff"/><path d="M17 10h29c1 0 2 1 2 2v8H15v-8c0-1 1-2 2-2z" fill="#41a5ee"/><path d="M15 20h33v9.500H15z" fill="#2b7cd3"/><path d="M15 29.500h33v9.500H15z" fill="#185abd"/><path d="M15 39h33v7c0 1-1 2-2 2H17c-1 0-2-1-2-2z" fill="#103f91"/><rect x="5" y="18" width="22" height="22" rx="2" fill="#1857b6"/><text x="16" y="34.500" text-anchor="middle" font-family="Inter" font-size="15" font-weight="700" fill="#fff">W</text></svg><i class="absolute top-[67px] left-[25px] size-2 rounded-full bg-[#aaa69a]"></i></div>

      <div class="relative"><svg width="58" height="58" viewBox="0 0 58 58"><rect width="58" height="58" rx="13.500" fill="url(#gAtom)"/><g fill="none" stroke="#eef8ea" stroke-width="1.900"><ellipse cx="29" cy="29" rx="19.500" ry="7" transform="rotate(-8 29 29)"/><ellipse cx="29" cy="29" rx="19.500" ry="7" transform="rotate(62 29 29)"/><ellipse cx="29" cy="29" rx="19.500" ry="7" transform="rotate(118 29 29)"/></g><circle cx="29" cy="29" r="2.600" fill="#eef8ea"/></svg><i class="absolute top-[67px] left-[25px] size-2 rounded-full bg-[#aaa69a]"></i></div>
    </div>

    <div class="ml-[18px] h-[70px] w-[2px] bg-[#63665f]"></div>
    <svg class="ml-[18px]" width="72" height="33" viewBox="0 0 72 33"><rect x="1" y="1" width="70" height="31" rx="2.500" fill="#1a1a1a" stroke="#a9b4b8" stroke-width="1.600"/><g stroke="#23752a" stroke-width="1"><path d="M4 4.500h22M4 9h12M4 11h15M4 17h24M4 19.500h12M4 21.500h17M4 23.500h14M4 26h38M4 28h34" stroke-dasharray="3 1"/></g><path d="M4 7h12M4 14.500h8" stroke="#7d3180" stroke-width="1"/></svg>
    <svg class="ml-[4px]" width="72" height="33" viewBox="0 0 72 33"><rect x="1" y="1" width="70" height="31" rx="2.500" fill="#1a1a1a" stroke="#a9b4b8" stroke-width="1.600"/><g stroke="#23752a" stroke-width="1"><path d="M5 8h36M5 10h7M5 12h7M5 17h7M5 22.500h36M5 24.500h14M5 27h30" stroke-dasharray="3 1"/></g><path d="M5 5.500h12M5 14.500h20M5 20h10" stroke="#7d3180" stroke-width="1"/></svg>
    <svg class="ml-[14px] overflow-visible" width="52" height="66" viewBox="0 0 53 66"><path d="M3 9L9 2l7 4 5-6 7 5 7-4 5 6 8 3-3 6H6z" fill="#e6e6e4"/><path d="M10 6l6 5M22 4l3 8M36 5l-5 7M44 8l-6 5" stroke="#5a5a5a" stroke-width="2"/><path d="M17 8l4 4" stroke="#2cb7c7" stroke-width="3"/><path d="M31 7l3 4" stroke="#e05a2d" stroke-width="3"/><path d="M1 9c8 8 43 8 51 0l-5 50c-1 8-40 8-41 0z" fill="url(#gTrash)"/><path d="M1 9c8 8 43 8 51 0" fill="none" stroke="#c4c8ca" stroke-width="1.600"/></svg>
  </div>
</footer>

<script>
  const tickets = [
    ['#62a19e0f', '29/08/2025, 08:55:48', 'positive'],
    ['#812e5490', '30/08/2025, 10:09:24', 'positive', 'This product is amazing!'],
    ['#9acb1086', '29/08/2025, 08:55:49', 'negative'],
    ['#4d37a32f', '29/08/2025, 08:55:02', 'positive'],
    ['#2aae07a6', '29/08/2025, 07:43:43', 'positive'],
    ['#ab0975ae', '29/08/2025, 07:43:34', 'negative'],
    ['#3411020f', '29/08/2025, 08:54:31', 'positive'],
    ['', '', 'positive']
  ];
  const tone = { positive: 'bg-[#dcfce7] text-[#166534]', negative: 'bg-[#fee2e2] text-[#991b1b]' };
  const row = ([id, date, mood, talk]) => `
    <div class="grid h-[116px] grid-cols-[443px_683px_398px_1fr] items-center border-b-2 border-[#e5e7eb] pr-[48px] pl-[48px] text-[28px]">
      <span class="font-medium text-[#111827]">${id}</span>
      <span class="-ml-px tracking-[-0.250px] text-[#6b7280]">${date}</span>
      <span class="-ml-px flex"><span class="flex h-[54px] items-center rounded-full bg-[#fee2e2] px-[15.500px] text-[32px] tracking-[-0.700px] text-[#991b1b]">closed</span></span>
      <span class="-ml-px flex items-center justify-between">
        <span class="flex h-[49px] items-center rounded-full px-[15.500px] tracking-[-0.350px] ${tone[mood]}">${mood}</span>
        <span class="flex items-center pr-2 pb-[10px] font-medium tracking-[0.100px] ${talk ? 'text-[#312e81]' : 'text-[#4f46e5]'}">
          <svg width="40" height="40" viewBox="0 0 24 24" fill="none" stroke="currentColor" stroke-width="2" stroke-linecap="round" stroke-linejoin="round"><path d="${talk ? 'm18 15-6-6-6 6' : 'm6 9 6 6 6-6'}"/></svg>
          <span class="mr-[31px] ml-[8px]">Details</span>
          <svg width="40" height="40" viewBox="0 0 24 24" fill="none" stroke="#dc2626" stroke-width="2" stroke-linecap="round" stroke-linejoin="round"><path d="M3 6h18M19 6v14c0 1-1 2-2 2H7c-1 0-2-1-2-2V6M8 6V4c0-1 1-2 2-2h4c1 0 2 1 2 2v2M10 11v6M14 11v6"/></svg>
        </span>
      </span>
    </div>` + (talk ? `
    <div class="h-[286px] border-b-2 border-[#e5e7eb] px-[2px] pt-[34px]">
      <div class="flex h-[248px] flex-col rounded-[12px] bg-[#f9fafb] px-8 pt-8 text-[32px]">
        <h4 class="text-[36px] leading-[56px] font-semibold tracking-[-0.750px]">Conversation:</h4>
        <p class="mt-[17px] flex items-center leading-[48px]"><i class="mr-[33px] size-[10px] rounded-full bg-black"></i><span><b class="font-semibold tracking-[-0.200px]">User:</b> <span class="-ml-px tracking-[-0.650px]">${talk}</span></span></p>
        <p class="mt-[15px] flex items-center leading-[48px] font-semibold"><span class="tracking-[-0.150px]">Sentiment:</span><span class="-my-[3px] ml-[16px] flex h-[54px] items-center rounded-full px-[15px] tracking-[-0.250px] ${tone[mood]}">${mood}</span></p>
      </div>
    </div>` : '');
  document.getElementById('tickets').insertAdjacentHTML('beforeend', tickets.map(row).join(''));
</script>
</body>
</html>
